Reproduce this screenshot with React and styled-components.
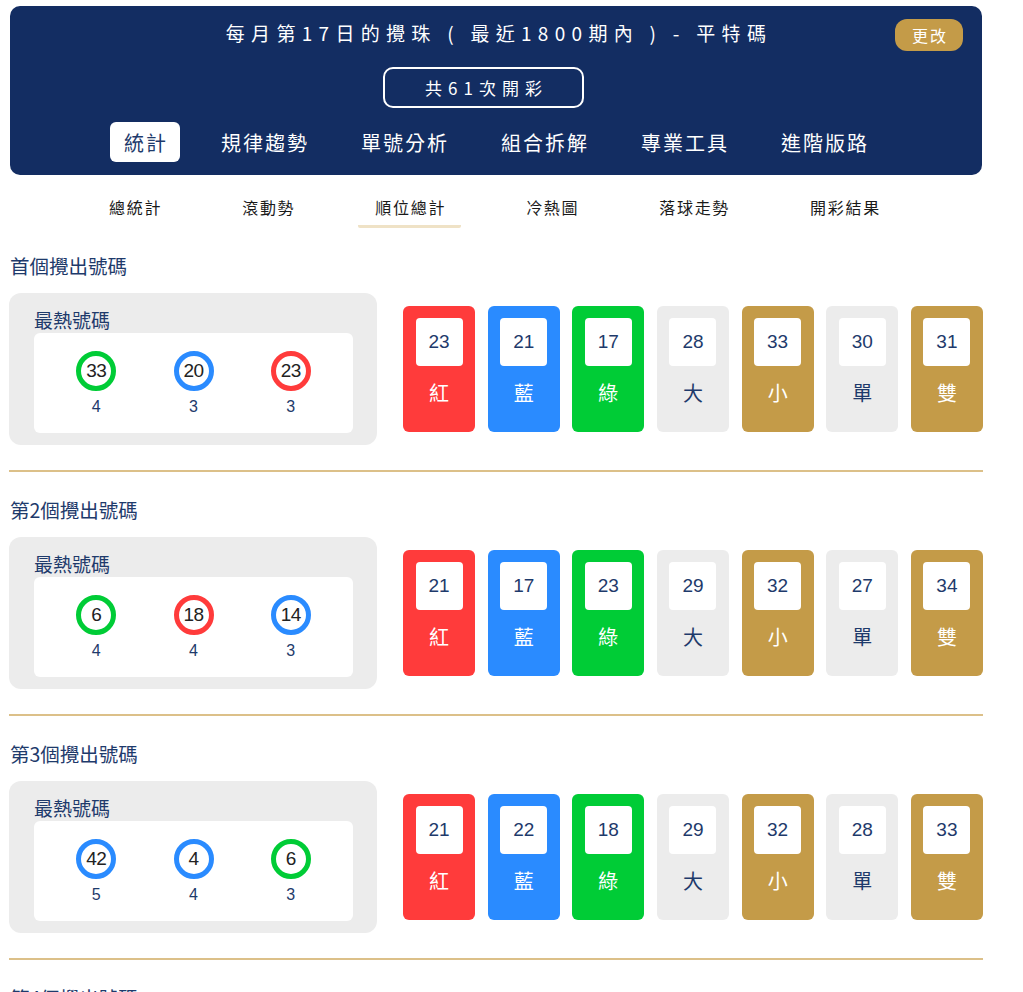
import React from 'react';
import styled, { createGlobalStyle } from 'styled-components';

const colors = {
  navy: '#132d62',
  text: '#1e3a6b',
  gold: '#c49b48',
  red: '#ff3b3b',
  blue: '#2a8bff',
  green: '#00cc36',
  gray: '#ececec',
  line: '#dcc089',
};

const GlobalStyle = createGlobalStyle`
  body {
    margin: 0;
    background: #fff;
    font-family: 'Noto Sans CJK TC', 'Liberation Sans', sans-serif;
  }
`;

const Page = styled.div`
  width: 972px;
  margin-left: 10px;
  padding-top: 6px;
`;

const Header = styled.header`
  background-color: ${colors.navy};
  border-radius: 10px;
  padding: 13px 0 13px;
  display: flex;
  flex-direction: column;
  align-items: center;
`;

const TitleRow = styled.div`
  width: 100%;
  display: grid;
  grid-template-columns: 1fr auto 1fr;
  align-items: center;
`;

const Title = styled.h1`
  grid-column: 2;
  align-self: start;
  margin: 0;
  padding-left: 6px;
  font-size: 19px;
  font-weight: 400;
  letter-spacing: 6.3px;
  color: #fff;
  line-height: 28px;
  white-space: pre;
`;

const ChangeButton = styled.button`
  justify-self: end;
  margin-right: 19px;
  width: 68px;
  height: 32px;
  border: none;
  border-radius: 12px;
  background-color: ${colors.gold};
  color: #fff;
  font-family: inherit;
  font-size: 16px;
  letter-spacing: 2px;
  padding: 0 0 0 2px;
`;

const CountBox = styled.div`
  margin: 16px 25px 0 0;
  width: 201px;
  height: 41px;
  box-sizing: border-box;
  border: 2px solid #fff;
  border-radius: 10px;
  display: flex;
  align-items: center;
  justify-content: center;
  color: #fff;
  font-size: 17px;
  letter-spacing: 6px;
  padding-left: 6px;
`;

const Tabs = styled.nav`
  margin-top: 14px;
  display: flex;
  gap: 28px;
  padding-right: 2px;
`;

const Tab = styled.div`
  height: 40px;
  padding: 0 11px 0 13px;
  display: flex;
  align-items: center;
  border-radius: 6px;
  font-size: 20px;
  letter-spacing: 2px;
  background-color: ${(p) => (p.$active ? '#fff' : 'transparent')};
  color: ${(p) => (p.$active ? colors.text : '#fff')};

  &:first-child {
    padding: 0 12px 0 14px;
  }
`;

const SubNav = styled.nav`
  margin-top: 20px;
  display: flex;
  justify-content: center;
  gap: 48px;
  padding-right: 4px;
`;

const SubItem = styled.div`
  padding: 0 15px 6px 17px;
  font-size: 16px;
  line-height: 24px;
  letter-spacing: 1.7px;
  color: #1a1a1a;
  border-bottom: 3px solid ${(p) => (p.$active ? '#efe2c6' : 'transparent')};
  border-radius: 2px;
`;

const Section = styled.section`
  padding-top: 26px;
`;

const SectionTitle = styled.h2`
  margin: -1px 0 14px;
  font-size: 19.5px;
  line-height: 26px;
  font-weight: 400;
  color: ${colors.text};
`;

const Row = styled.div`
  display: flex;
  align-items: center;
  gap: 26px;
  margin-left: -1px;
  margin-right: -1px;
`;

const HotBox = styled.div`
  width: 368px;
  flex: none;
  box-sizing: border-box;
  background-color: ${colors.gray};
  border-radius: 12px;
  padding: 14px 24px 12px 25px;
`;

const HotTitle = styled.div`
  font-size: 19px;
  line-height: 26px;
  color: ${colors.text};
`;

const HotList = styled.div`
  background: #fff;
  border-radius: 6px;
  height: 100px;
  box-sizing: border-box;
  padding: 18px 0 0;
  display: flex;
  justify-content: space-evenly;
`;

const HotItem = styled.div`
  width: 70px;
  display: flex;
  flex-direction: column;
  align-items: center;
  gap: 6px;
`;

const Ball = styled.div`
  width: 40px;
  height: 40px;
  box-sizing: border-box;
  border-radius: 50%;
  border: 5px solid ${(p) => p.$color};
  background: #fff;
  display: flex;
  align-items: center;
  justify-content: center;
  font-family: 'Liberation Sans', Arial, sans-serif;
  font-size: 19px;
  letter-spacing: -0.5px;
  color: #222;
`;

const HotCount = styled.div`
  font-family: 'Liberation Sans', Arial, sans-serif;
  font-size: 16px;
  line-height: 20px;
  color: ${colors.text};
`;

const Cards = styled.div`
  flex: 1;
  display: flex;
  gap: 12.5px;
`;

const Card = styled.div`
  flex: 1;
  height: 126px;
  box-sizing: border-box;
  border-radius: 6px;
  padding-top: 12px;
  background-color: ${(p) => p.$bg};
  display: flex;
  flex-direction: column;
  align-items: center;
`;

const CardNum = styled.div`
  width: 47px;
  height: 48px;
  border-radius: 4px;
  background: #fff;
  display: flex;
  align-items: center;
  justify-content: center;
  font-family: 'Liberation Sans', Arial, sans-serif;
  font-size: 19px;
  color: ${colors.text};
`;

const CardLabel = styled.div`
  margin-top: 14px;
  font-size: 20px;
  line-height: 26px;
  color: ${(p) => (p.$dark ? colors.text : '#fff')};
`;

const Divider = styled.hr`
  margin: 25px -1px 0;
  border: none;
  height: 2px;
  background-color: ${colors.line};
`;

const kinds = [
  { label: '紅', bg: colors.red },
  { label: '藍', bg: colors.blue },
  { label: '綠', bg: colors.green },
  { label: '大', bg: colors.gray, dark: true },
  { label: '小', bg: colors.gold },
  { label: '單', bg: colors.gray, dark: true },
  { label: '雙', bg: colors.gold },
];

const sections = [
  {
    title: '首個攪出號碼',
    hot: [
      { n: 33, c: colors.green, k: 4 },
      { n: 20, c: colors.blue, k: 3 },
      { n: 23, c: colors.red, k: 3 },
    ],
    nums: [23, 21, 17, 28, 33, 30, 31],
  },
  {
    title: '第2個攪出號碼',
    hot: [
      { n: 6, c: colors.green, k: 4 },
      { n: 18, c: colors.red, k: 4 },
      { n: 14, c: colors.blue, k: 3 },
    ],
    nums: [21, 17, 23, 29, 32, 27, 34],
  },
  {
    title: '第3個攪出號碼',
    hot: [
      { n: 42, c: colors.blue, k: 5 },
      { n: 4, c: colors.blue, k: 4 },
      { n: 6, c: colors.green, k: 3 },
    ],
    nums: [21, 22, 18, 29, 32, 28, 33],
  },
  {
    title: '第4個攪出號碼',
    hot: [
      { n: 12, c: colors.red, k: 4 },
      { n: 25, c: colors.blue, k: 4 },
      { n: 38, c: colors.green, k: 3 },
    ],
    nums: [22, 20, 19, 30, 31, 29, 32],
  },
];

const tabs = ['統計', '規律趨勢', '單號分析', '組合拆解', '專業工具', '進階版路'];
const subTabs = ['總統計', '滾動勢', '順位總計', '冷熱圖', '落球走勢', '開彩結果'];

const App = () => (
  <Page>
    <GlobalStyle />
    <Header>
      <TitleRow>
        <Title>每月第17日的攪珠 ( 最近1800期內 ) - 平特碼</Title>
        <ChangeButton>更改</ChangeButton>
      </TitleRow>
      <CountBox>共61次開彩</CountBox>
      <Tabs>
        {tabs.map((t, i) => (
          <Tab key={t} $active={i === 0}>
            {t}
          </Tab>
        ))}
      </Tabs>
    </Header>
    <SubNav>
      {subTabs.map((t, i) => (
        <SubItem key={t} $active={i === 2}>
          {t}
        </SubItem>
      ))}
    </SubNav>
    {sections.map((s) => (
      <Section key={s.title}>
        <SectionTitle>{s.title}</SectionTitle>
        <Row>
          <HotBox>
            <HotTitle>最熱號碼</HotTitle>
            <HotList>
              {s.hot.map((h, i) => (
                <HotItem key={i}>
                  <Ball $color={h.c}>{h.n}</Ball>
                  <HotCount>{h.k}</HotCount>
                </HotItem>
              ))}
            </HotList>
          </HotBox>
          <Cards>
            {kinds.map((k, i) => (
              <Card key={k.label} $bg={k.bg}>
                <CardNum>{s.nums[i]}</CardNum>
                <CardLabel $dark={k.dark}>{k.label}</CardLabel>
              </Card>
            ))}
          </Cards>
        </Row>
        <Divider />
      </Section>
    ))}
  </Page>
);

export default App;
